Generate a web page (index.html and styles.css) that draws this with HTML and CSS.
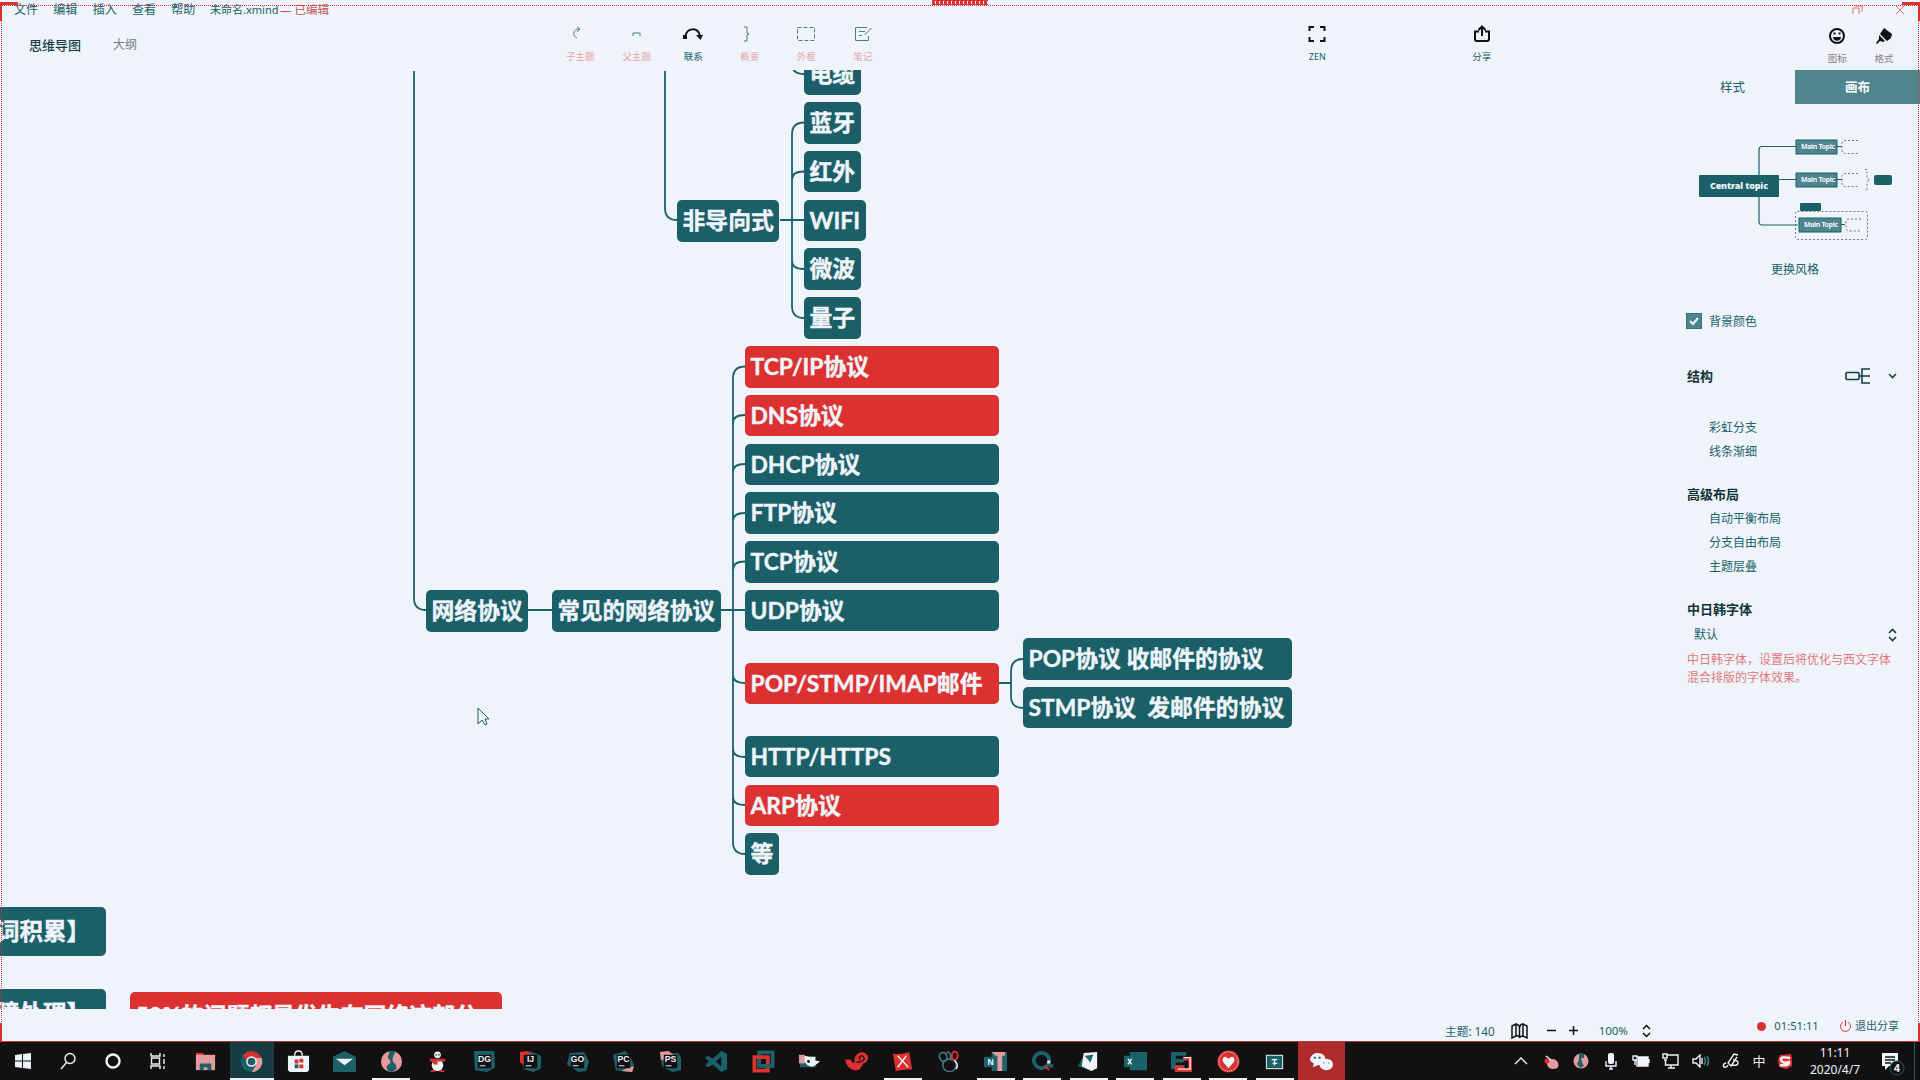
FILE: index.html
```html
<!DOCTYPE html>
<html lang="zh-CN">
<head>
<meta charset="utf-8">
<title>未命名.xmind</title>
<link rel="stylesheet" href="styles.css">
</head>
<body>
<div class="desktop">
  <div class="app">
    <header class="header">
      <div class="menubar">
        <nav class="menus"><span>文件</span><span>编辑</span><span>插入</span><span>查看</span><span>帮助</span></nav>
        <span class="doc">未命名.xmind</span><span class="edited">— 已编辑</span>
        <div class="winctl">
          <svg width="12" height="10" viewBox="0 0 12 10"><path d="M1 9V3h6v6M3 1h7v6"/></svg>
          <svg width="10" height="10" viewBox="0 0 10 10"><path d="M1 1l8 8M9 1L1 9"/></svg>
        </div>
      </div>
      <div class="toolbar">
        <div class="views"><b>思维导图</b><span>大纲</span></div>
        <div class="tools">
          <div class="tool faint"><svg width="20" height="18" viewBox="0 0 20 18"><path d="M7 13C2 11 3 4 9 4M7 2l3 2-3 3"/></svg><span>子主题</span></div>
          <div class="tool faint"><svg width="20" height="18" viewBox="0 0 20 18"><path d="M6 11V8h7v3"/></svg><span>父主题</span></div>
          <div class="tool"><svg class="strong" width="22" height="18" viewBox="0 0 22 18"><path d="M3 12C5 2 16 2 18 11"/><path class="fill" d="M1 10h4v4H1zM14 10h7l-2.500 5z"/></svg><span>联系</span></div>
          <div class="tool faint"><svg width="20" height="18" viewBox="0 0 20 18"><path d="M4 2h3v6l2 1-2 1v6H4"/></svg><span>概要</span></div>
          <div class="tool faint"><svg width="20" height="18" viewBox="0 0 20 18"><path stroke-dasharray="4 2" d="M1.500 2.500h17v13h-17z"/></svg><span>外框</span></div>
          <div class="tool faint"><svg width="20" height="18" viewBox="0 0 20 18"><path d="M14 2.500H2.500v13h13V11M6 6.500h6M6 10.500h3M18.500 3l-7 7"/></svg><span>笔记</span></div>
        </div>
        <div class="tool zen"><svg class="strong" width="18" height="18" viewBox="0 0 18 18"><path d="M1.500 6V2H6M12 2h4.500v4M16.500 12v4H12M6 16H1.500v-4"/></svg><span>ZEN</span></div>
        <div class="tool share"><svg class="strong" width="18" height="18" viewBox="0 0 18 18"><path d="M6 6.500H2V14q0 2 2 2h10q2 0 2-2V6.500h-4M9 11V2M5.500 5L9 1.500 12.500 5"/></svg><span>分享</span></div>
        <div class="tool emoji"><svg class="strong" width="18" height="18" viewBox="0 0 18 18"><circle cx="9" cy="9" r="7"/><path class="fill" d="M5 10h8c0 5-8 5-8 0zM5.500 5.500h2v2h-2zM10.500 5.500h2v2h-2z"/></svg><span class="warm">图标</span></div>
        <div class="tool format"><svg width="18" height="18" viewBox="0 0 18 18"><path class="fill" d="M9 1l8 6-1 4-4 3-7-7zM4 8l6 6-2 1-3-1-3 3-1-1 3-4z"/></svg><span class="warm">格式</span></div>
      </div>
    </header>

    <div class="workspace">
      <main class="canvas">
        <svg class="links" width="1662" height="939" viewBox="0 70 1662 939">
          <path d="M414 71V598q0 12 12 12M665 71V208q0 12 12 12M780 220h24M792 64q0 10 12 10M804 122.500q-12 0-12 12V306q0 12 12 12M804 171.500q-12 0-12 8M792 261q0 8 12 8M528 610h24M721 610h24"/>
          <path d="M745 366.500q-12 0-12 12V842q0 12 12 12M745 415q-12 0-12 8M745 464q-12 0-12 8M745 513q-12 0-12 8M745 561.500q-12 0-12 8M733 675q0 8 12 8M733 749q0 8 12 8M733 797q0 8 12 8M999 683h12M1023 659q-12 0-12 12v25q0 12 12 12"/>
        </svg>
        <div class="branch media"><div class="node">电缆</div><div class="node">蓝牙</div><div class="node">红外</div><div class="node">WIFI</div><div class="node">微波</div><div class="node">量子</div></div>
        <div class="branch unguided"><div class="node">非导向式</div></div>
        <div class="branch network"><div class="node">网络协议</div></div>
        <div class="branch common"><div class="node">常见的网络协议</div></div>
        <div class="branch protocols">
          <div class="node red">TCP/IP协议</div><div class="node red">DNS协议</div><div class="node">DHCP协议</div><div class="node">FTP协议</div><div class="node">TCP协议</div><div class="node">UDP协议</div>
          <div class="node red mailnode">POP/STMP/IMAP邮件</div>
          <div class="node">HTTP/HTTPS</div><div class="node red">ARP协议</div><div class="node short">等</div>
        </div>
        <div class="branch mail"><div class="node">POP协议 收邮件的协议</div><div class="node">STMP协议&nbsp; 发邮件的协议</div></div>
        <div class="branch roots"><div class="node big">词积累】</div><div class="node big">障处理】</div></div>
        <div class="branch note"><div class="node red big">50%的问题都是发生在网络这部分</div></div>
        <svg class="cursor" width="13" height="20" viewBox="0 0 13 20"><path d="M1 1v16l4-4 3 5 2-1-2-5h4z"/></svg>
      </main>

      <aside class="panel">
        <div class="tabs"><span>样式</span><span class="on">画布</span></div>
        <svg class="preview" width="250" height="120" viewBox="1670 130 250 120">
          <g class="pl"><path d="M1796 146.500h-34q-3 0-3 3v72q0 3.500 3 3.500h36M1779 179.500h17M1837 146.500h5M1837 179.500h5M1841 224.500h4"/></g>
          <rect class="pf" x="1699" y="175" width="80" height="22" rx="1"/>
          <text class="ct" x="1710" y="189" textLength="58">Central topic</text>
          <g class="pm"><rect x="1796" y="140" width="41" height="14"/><rect x="1796" y="173" width="41" height="14"/><rect x="1799" y="218" width="42" height="14"/></g>
          <g class="mt"><text x="1801" y="149" textLength="34">Main Topic</text><text x="1801" y="182" textLength="34">Main Topic</text><text x="1804" y="227" textLength="34">Main Topic</text></g>
          <rect class="pf" x="1800" y="203" width="21" height="8" rx="1"/><rect class="pf" x="1874" y="175" width="18" height="10" rx="2"/>
          <rect class="dash" x="1795.500" y="211.500" width="72" height="28" rx="2"/>
          <path class="dash" d="M1858 140.500h-13q-3 0-3 3v6q0 4 3 4h13M1858 173.500h-13q-3 0-3 3v6q0 4 3 4h13M1861 219h-12q-3 0-3 3v5q0 4 3 4h12M1865 169.500h2v9l3 1.500-3 1.500v9h-2"/>
        </svg>
        <div class="restyle">更换风格</div>
        <div class="check"><svg width="16" height="16" viewBox="0 0 16 16"><rect width="16" height="16" rx="1"/><path d="M4 8l3 3 5-6"/></svg><span>背景颜色</span></div>
        <div class="row structure"><b>结构</b><svg width="26" height="18" viewBox="0 0 26 18"><rect x="1" y="5.500" width="13" height="7" rx="1"/><path d="M14 9h11M25 2h-8v14h8"/></svg><svg width="9" height="6" viewBox="0 0 9 6"><path d="M1 1l3.500 3.500L8 1"/></svg></div>
        <div class="options first"><span>彩虹分支</span><span>线条渐细</span></div>
        <b class="title layout">高级布局</b>
        <div class="options"><span>自动平衡布局</span><span>分支自由布局</span><span>主题层叠</span></div>
        <b class="title cjk">中日韩字体</b>
        <div class="row font"><span>默认</span><svg width="9" height="14" viewBox="0 0 9 14"><path d="M1 5l3.500-3.500L8 5M1 9l3.500 3.500L8 9"/></svg></div>
        <p class="hint">中日韩字体，设置后将优化与西文字体<br>混合排版的字体效果。</p>
      </aside>
    </div>

    <footer class="status">
      <span class="count">主题: 140</span>
      <svg class="map" width="17" height="16" viewBox="0 0 17 16"><path d="M1 3l4-2v12l-4 2zM5 1q4 1 3.500 4v10Q9 12 5 13M8.500 5Q9 1 12 1v12q-3 0-3.500 2M12 1l4 2v12l-4-2"/></svg>
      <svg class="minus" width="9" height="9" viewBox="0 0 9 9"><path d="M0 4.500h9"/></svg>
      <svg class="plus" width="9" height="9" viewBox="0 0 9 9"><path d="M0 4.500h9M4.500 0v9"/></svg>
      <span class="zoom">100%</span>
      <svg class="updown" width="9" height="14" viewBox="0 0 9 14"><path d="M1 5l3.500-3.500L8 5M1 9l3.500 3.500L8 9"/></svg>
      <i class="rec"></i><span class="time">01:51:11</span>
      <svg class="power" width="13" height="13" viewBox="0 0 13 13"><path d="M4 2a5 5 0 1 0 5 0M6.500 0v6"/></svg><span class="quit">退出分享</span>
    </footer>
    <div class="shareframe"><i class="tl"></i><i class="tr"></i><i class="bl"></i><i class="br"></i><i class="tab"></i></div>
  </div>

  <div class="taskbar">
    <div class="sys">
      <span><svg width="16" height="18" viewBox="0 0 16 18"><path class="w" d="M0 3l7-1v6.500H0zM8 2l8-1v7.500H8zM0 9.500h7V16l-7-1zM8 9.500h8V17l-8-1z"/></svg></span>
      <span><svg width="18" height="18" viewBox="0 0 18 18"><circle class="wl" cx="11" cy="6.500" r="5"/><path class="wl" d="M7.500 10.500L2 17"/></svg></span>
      <span><svg width="18" height="18" viewBox="0 0 18 18"><circle class="wl thick" cx="9" cy="9" r="6.500"/></svg></span>
      <span><svg width="18" height="18" viewBox="0 0 18 18"><path class="wl" d="M2 1v3h9V1M2.500 6h8v6h-8zM2 17v-3h9v3M15 2v3M15 7v5M15 14v3"/></svg></span>
    </div>
    <div class="apps">
      <span><svg viewBox="0 0 24 24"><path class="r" d="M2 3h8v3H2z"/><path class="p" d="M2 5h20v16H2z"/><path class="t" d="M6 14h12v7h-4v-3h-4v3H6z"/></svg></span>
      <span class="active run"><svg viewBox="0 0 24 24"><circle class="t" cx="12" cy="12" r="11"/><path class="p" d="M13 8h9.500a11 11 0 0 1-10 15l4-7z"/><path class="r" d="M3 6a11 11 0 0 1 19 2H12l-5 3z"/><circle class="w" cx="12" cy="12" r="5.500"/><circle class="t" cx="12" cy="12" r="4"/></svg></span>
      <span><svg viewBox="0 0 24 24"><path class="wl" d="M8 6q0-5 4-5t4 5"/><path class="w" d="M1 6h22v15l-2 2H3l-2-2z"/><path class="r" d="M8 10h4v4H8zM13 9h4v4h-4zM13 15h4v4h-4z"/><path class="t" d="M8 15h4v4H8z"/></svg></span>
      <span><svg viewBox="0 0 24 24"><path class="t" d="M0 7l12-6 12 6v16H0z"/><path class="w" d="M3 9h18l-9 7z"/></svg></span>
      <span class="run"><svg viewBox="0 0 24 24"><circle class="p" cx="12" cy="12" r="11"/><path class="t" d="M10 1h7l-3 5-1 4 1 3q4 2 3 7l-5 3q-6-1-5-6l4-4-1-3q-3-1-1-5z"/></svg></span>
      <span><svg viewBox="0 0 24 24"><circle class="w" cx="12" cy="5" r="3.500"/><ellipse class="w" cx="12" cy="16" rx="6" ry="6"/><path class="r" d="M4 9h16v3H4zM7 12h5v3H8zM5 21h5v2H5zM14 21h5v2h-5z"/><path class="k" d="M10 4h1v2h-1zM13 4h1v2h-1z"/></svg></span>
      <span><svg viewBox="0 0 24 24"><path class="t" d="M1 1h21l1 17-8 5L2 21z"/><path class="k" d="M5 5h14v14H5z"/><path class="w" d="M7 16h6v1H7z"/><text x="12" y="13">DG</text></svg></span>
      <span><svg viewBox="0 0 24 24"><path class="t" d="M2 8L11 1l12 5v13l-8 4-10-3z"/><path class="r" d="M1 2l8-1 5 5-8 9-5-2z"/><path class="k" d="M5 5h14v14H5z"/><path class="w" d="M7 16h6v1H7z"/><text x="12" y="13">IJ</text></svg></span>
      <span><svg viewBox="0 0 24 24"><path class="t" d="M4 3l15-1 5 10-3 10-8 1L1 15z"/><path class="k" d="M5 5h14v14H5z"/><path class="w" d="M7 16h6v1H7z"/><text x="12" y="13">GO</text></svg></span>
      <span><svg viewBox="0 0 24 24"><path class="t" d="M1 5l13-4 4 5 5 9-4 8-15-2z"/><path class="p" d="M15 19l8-2-2 6-11-1z"/><path class="k" d="M5 5h14v14H5z"/><path class="w" d="M7 16h6v1H7z"/><text x="12" y="13">PC</text></svg></span>
      <span><svg viewBox="0 0 24 24"><path class="t" d="M2 4l18-1 3 5v13l-9 2L3 17z"/><path class="p" d="M1 2l9-1 5 4-13 6z"/><path class="k" d="M5 5h14v14H5z"/><path class="w" d="M7 16h6v1H7z"/><text x="12" y="13">PS</text></svg></span>
      <span><svg viewBox="0 0 24 24"><path class="t" fill-rule="evenodd" d="M17 1l6 3v16l-6 3-9-8-5 3-3-2 4-4-4-4 3-2 5 3zM17 7l-6 5 6 5z"/></svg></span>
      <span><svg viewBox="0 0 24 24"><path class="ts" d="M7.500 2.500h14v14h-14z"/><path class="rs" d="M2.500 7.500h14v14h-14z"/><path class="ts" d="M7.500 11v5.500H21.500"/></svg></span>
      <span><svg viewBox="0 0 24 24"><path class="t" d="M2 7h17v11H2z"/><path class="w" d="M1 6h6l5 1h6v4l5 1-5 4q-3 3-8 0z"/><path class="p" d="M1 5h6v9H1z"/><circle class="k" cx="11" cy="12" r="1.500"/></svg></span>
      <span><svg viewBox="0 0 24 24"><path class="r" d="M0 10h6q1 4 4 3-1-9 7-11 7 1 7 6t-5 6q-3 8-9 7-8-1-10-11z"/><path class="kl" d="M12 13q5 0 8-3 0-4-3-4-4 2-1 4"/></svg></span>
      <span class="run"><svg viewBox="0 0 24 24"><path class="r" d="M2 4q9 1 17-2l3 18q-9 0-17 2z"/><path class="wl" d="M7 6l11 12M16 6L7 18"/></svg></span>
      <span><svg viewBox="0 0 24 24"><path class="tl2" d="M5 12q-5-3-3-8 3-3 6 0 3 4 0 7zM8 4q4-4 5 1v6"/><ellipse class="tl2" cx="12" cy="16" rx="7" ry="6.500"/><ellipse class="rl" cx="17.500" cy="6" rx="3" ry="4.500"/><path class="wl" d="M17 11q5 3 2 9"/></svg></span>
      <span class="run"><svg viewBox="0 0 24 24"><path class="t" d="M8 2h16v20H8zM0 7h14v11H0z"/><path class="p" d="M8 2h14v4H12zM14 6h5v16h-5z"/><text x="7" y="16">N</text></svg></span>
      <span class="run"><svg viewBox="0 0 24 24"><circle class="ts" cx="11" cy="11" r="8"/><path class="ts" d="M16 15l7 2"/><path class="rl" d="M14 16l5 5"/><path class="w" d="M17 11h3v3h-3z"/></svg></span>
      <span class="run"><svg viewBox="0 0 24 24"><path class="t" d="M8 4L1 17l15 5z"/><path class="w" d="M7 3l14-1v17l-6 3-10-5z"/><path class="t" d="M8 6l9-1-3 8z"/></svg></span>
      <span class="run"><svg viewBox="0 0 24 24"><path class="t" d="M6 2h18v19H6zM0 6h12v12H0z"/><path class="wl" d="M4 9l4 6M8 9l-4 6"/></svg></span>
      <span class="run"><svg viewBox="0 0 24 24"><path class="t" d="M1 2h16v4H6v3h9v4H6v3h9v4H1z"/><path class="rs" d="M14 9h7v12H7v-3h8"/><path class="wl" d="M14 8h7v12H8"/></svg></span>
      <span class="run"><svg viewBox="0 0 24 24"><circle class="r" cx="12" cy="12" r="11.500"/><circle class="rw" cx="12" cy="12" r="10"/><path class="w" d="M12 19L6 12q-1-5 3-5l3 2 3-2q4 0 3 5z"/></svg></span>
      <span class="run"><svg viewBox="0 0 24 24"><path class="w" d="M3 5h18v15H3z"/><path class="t" d="M4 6h16v13H4z"/><path class="wl" d="M9 10h6M10 14h5M12 9v7"/></svg></span>
      <span class="wechat"><svg viewBox="0 0 24 24"><path class="w" d="M8 3q8 0 8 7 0 6-8 6l-5 2 1-4Q0 12 0 9q2-6 8-6z"/><ellipse class="w" cx="17" cy="15" rx="7" ry="6"/><path class="t" d="M4 7h2v2H4zM9 7h2v2H9zM14 13h1v1h-1zM19 13h1v1h-1z"/></svg></span>
    </div>
    <div class="tray">
      <span><svg width="14" height="8" viewBox="0 0 14 8"><path class="wl" d="M1 7l6-6 6 6"/></svg></span>
      <span><svg width="16" height="16" viewBox="0 0 16 16"><path class="p" d="M4 7q9-3 11 3t-6 6q-6-1-5-9z"/><path class="wl" d="M3 3l5 4"/><circle class="r" cx="4" cy="8" r="2.500"/></svg></span>
      <span><svg width="16" height="16" viewBox="0 0 16 16"><circle class="p" cx="8" cy="8" r="7.500"/><path class="t" d="M6 1h5v4H8l1 4 2 4-4 2-3-4 2-4z"/></svg></span>
      <span><svg width="12" height="18" viewBox="0 0 12 18"><rect class="w" x="3" y="1" width="6" height="11" rx="2"/><path class="wl" d="M1 9v5h10V9M6 14v3M4 17h4"/></svg></span>
      <span><svg width="18" height="14" viewBox="0 0 18 14"><path class="w" d="M6 3h10v9H6z"/><path class="wl" d="M1 2h4v4H1zM3 6v5M5 3h11v9H5zM17 5v4"/></svg></span>
      <span><svg width="18" height="16" viewBox="0 0 18 16"><path class="wl" d="M2 7h3M3.500 7v5H16V2H5M1 1h4v4H1zM9 12v3M6 15h7"/></svg></span>
      <span><svg width="18" height="14" viewBox="0 0 18 14"><path class="wl" d="M1 5h3l4-4v12L4 9H1zM10 4v6"/><path class="tl2" d="M12 3q3 4 0 8M15 2q3 5 0 10"/></svg></span>
      <span><svg width="18" height="16" viewBox="0 0 18 16"><path class="wl" d="M16 2l-4-1-6 9 3 3 6-9M4 10q-4 1-2 4 3 1 4-2M11 7q5 0 5 3t-6 2"/></svg></span>
      <span class="ime">中</span>
      <span><svg width="16" height="16" viewBox="0 0 16 16"><path class="r" d="M3 2l11-1 1 4v8l-6 3-7-2-1-8z"/><path class="wl thick" d="M13 5Q3 3 4 7t8 2q1 4-9 3"/></svg></span>
      <div class="clock"><span>11:11</span><span>2020/4/7</span></div>
      <div class="notify"><svg width="24" height="24" viewBox="0 0 24 24"><path class="w" d="M1 1h16v13H8l-4 4v-4H1z"/><path class="kl" d="M4 5h10M4 8h10M4 11h6"/><circle cx="16" cy="16" r="7"/><text x="16" y="20">4</text></svg></div>
    </div>
  </div>
</div>
</body>
</html>
```

FILE: styles.css
```css
:root { --bg: #eef4f9; --teal: #1b616a; --node: #1b5f68; --red: #dc3131; --ink: #121011; }
* { box-sizing: border-box; }
body { margin: 0; background: var(--bg); color: var(--teal); font: 12px/16px "Noto Sans", "Noto Sans CJK SC", sans-serif; }
svg { display: block; flex: none; fill: none; stroke: currentColor; }
text { stroke: none; }
.desktop { width: 1920px; height: 1080px; display: flex; flex-direction: column; overflow: hidden; }
.app { height: 1042px; display: flex; flex-direction: column; position: relative; }

.header { height: 70px; }
.menubar { height: 20px; padding: 2px 15px 0 14px; display: flex; white-space: nowrap; }
.menus { display: flex; gap: 15.300px; width: 196px; }
.doc { width: 70px; font-size: 11px; }
.edited { color: #c2585d; font-size: 11.500px; }
.winctl { margin-left: auto; display: flex; gap: 31px; align-items: center; color: #e07577; margin-top: -3px; }
.toolbar { height: 50px; padding-left: 29px; display: flex; }
.views { width: 524px; display: flex; align-items: center; gap: 32px; padding-bottom: 1px; }
.views b { font-size: 13px; color: #123e45; font-weight: 500; }
.views span { color: #6f8187; }
.tools { display: flex; gap: 2px; margin-right: 12px; }
.tool { width: 54.500px; display: flex; flex-direction: column; align-items: center; font-size: 9.500px; line-height: 12px; padding-top: 5px; gap: 8px; }
.tool.faint { color: #4b7f88; }
.tool.faint span { color: #e8a5a9; }
.tool .fill { fill: var(--ink); stroke: none; }
.strong { color: var(--ink); stroke-width: 2; }
.warm { color: #8c7d84; }
.zen { margin-left: 388px; }
.zen span { font-size: 9px; }
.share { margin-left: 110px; }
.emoji { margin-left: 301px; padding-top: 7px; }
.format { width: 39px; padding-top: 7px; }

.workspace { height: 939px; display: flex; }
.canvas { width: 1670px; position: relative; overflow: hidden; }
.links { stroke: var(--teal); stroke-width: 1.800; }
.branch { position: absolute; display: flex; flex-direction: column; align-items: flex-start; gap: 7.250px; }
.node { height: 41.500px; padding: 0 5.500px; border-radius: 5px; background: var(--node); color: var(--bg); font: bold 22.850px/41.500px "Lato", "Noto Sans CJK SC", sans-serif; white-space: pre; -webkit-text-stroke: 0.400px var(--bg); }
.node.red { background: var(--red); }
.media { left: 804px; top: -16.750px; }
.unguided { left: 677px; top: 130px; }
.network { left: 426px; top: 520px; }
.common { left: 552px; top: 520px; }
.common .node { font-size: 22.500px; }
.protocols { left: 745px; top: 276px; width: 254px; align-items: stretch; }
.mailnode { margin: 24.300px 0; }
.node.short { align-self: flex-start; }
.mail { left: 1023px; top: 568px; width: 269px; align-items: stretch; }
.node.big { height: 49px; font-size: 23.500px; line-height: 49px; }
.roots { left: -20px; top: 837px; gap: 33px; width: 126px; align-items: stretch; }
.roots .node { padding-left: 16px; }
.note { left: 130px; top: 922px; width: 372px; align-items: stretch; }
.note .node.big { font-size: 22.850px; line-height: 47px; }
.cursor { position: absolute; left: 477px; top: 637px; }

.panel { width: 250px; display: flex; flex-direction: column; }
.tabs { display: flex; height: 34px; line-height: 36px; text-align: center; font-size: 12.500px; }
.tabs span { flex: 1; }
.tabs .on { background: #4f868e; color: #fff; font-weight: bold; }
.preview { margin-top: 26px; }
.pl { stroke: var(--teal); stroke-width: 1.200; }
.pf { fill: var(--node); stroke: none; }
.pm { fill: #4f868e; stroke: var(--teal); }
.ct { font: 900 9px "Noto Sans", sans-serif; fill: var(--bg); }
.mt { font: bold 7px "Noto Sans", sans-serif; fill: var(--bg); }
.dash { stroke: #86707a; stroke-dasharray: 2 2; }
.restyle { text-align: center; margin-top: 12px; }
.check { display: flex; align-items: center; gap: 7px; margin: 35px 0 0 16px; }
.check rect { fill: #4f868e; stroke: var(--teal); }
.check path { stroke: var(--bg); stroke-width: 2; }
.check span { position: relative; top: 1px; }
.row { display: flex; align-items: center; }
.row svg { color: #123e45; stroke-width: 1.600; }
.panel b { font-size: 13px; color: #123238; }
.structure { margin: 37.500px 23px 0 17px; height: 18px; gap: 17px; }
.structure b { margin-right: auto; }
.options { margin: 9px 0 0 39px; display: flex; flex-direction: column; gap: 8.300px; }
.options.first { margin-top: 35.500px; }
.title { margin-left: 17px; }
.layout { margin-top: 25.500px; }
.cjk { margin-top: 25.500px; }
.font { margin: 10.500px 23px 0 24px; justify-content: space-between; }
.hint { margin: 8px 0 0 17px; line-height: 18px; color: #e2787b; white-space: nowrap; }

.status { height: 33px; padding: 10px 21px 0 1445px; display: flex; align-items: center; white-space: nowrap; }
.status svg { color: var(--ink); stroke-width: 1.500; }
.count { width: 66px; font-size: 11.700px; }
.status .minus { margin-left: 19px; }
.status .plus { margin-left: 13px; }
.zoom { margin-left: 21px; width: 44px; font-size: 11.500px; }
.rec { width: 9px; height: 9px; border-radius: 50%; background: var(--red); margin: -8px 8px 0 106px; }
.time { width: 65px; font-size: 11.200px; margin-top: -10px; }
.status .power { color: var(--red); stroke-width: 1; margin: -9px 3px 0 0; }
.quit { font-size: 11px; margin-top: -9px; }

.shareframe { position: absolute; inset: 5px 1px 0; border: 1px dotted var(--red); border-bottom: 1px solid #a83a3d; pointer-events: none; }
.shareframe i { position: absolute; border: 0 solid var(--red); width: 18px; height: 19px; }
.shareframe .tl { left: -2px; top: -4px; border-width: 3px 0 0 2px; }
.shareframe .tr { right: -2px; top: -4px; border-width: 3px 2px 0 0; }
.shareframe .bl { left: -2px; bottom: -1px; border-width: 0 0 1px 2px; }
.shareframe .br { right: -2px; bottom: -1px; border-width: 0 2px 1px 0; }
.shareframe .tab { left: 930px; top: -6px; width: 56px; height: 5px; background: repeating-linear-gradient(90deg, transparent 0 3px, var(--bg) 3px 4px) 0 1px / 100% 3px no-repeat var(--red); }

.taskbar { height: 38px; background: var(--ink); color: var(--bg); display: flex; }
.sys { display: flex; width: 182px; }
.sys span { width: 45px; display: grid; place-items: center; }
.apps { display: flex; width: 1163px; }
.apps span { width: 46.500px; display: grid; place-items: center; border: 0 solid var(--bg); }
.apps svg { width: 23px; height: 23px; stroke: none; }
.apps text { font: bold 9px "Liberation Sans", sans-serif; fill: var(--bg); text-anchor: middle; }
.apps .run { background: linear-gradient(var(--bg), var(--bg)) 50% 100% / 38px 2px no-repeat; }
.apps .active { background: linear-gradient(var(--bg), var(--bg)) 50% 100% / 44px 2px no-repeat, linear-gradient(#173d43, #173d43) 50% 0 / 44px 38px no-repeat; }
.apps .wechat { background: #b02b2c; }
.w { fill: var(--bg); stroke: none; }
.t { fill: var(--teal); stroke: none; }
.r { fill: var(--red); stroke: none; }
.p { fill: #e59a9e; stroke: none; }
.k { fill: var(--ink); stroke: none; }
.wl { stroke: var(--bg); stroke-width: 1.400; }
.kl { stroke: var(--ink); stroke-width: 1.300; }
.rw { stroke: var(--bg); stroke-width: 1; stroke-dasharray: 1 1; }
.rl { stroke: var(--red); stroke-width: 2; }
.tl2 { stroke: #3c7b84; stroke-width: 1.600; }
.ts { stroke: var(--teal); stroke-width: 4; }
.rs { stroke: var(--red); stroke-width: 4; }
.thick { stroke-width: 2.400; }
.tray { margin-left: auto; width: 414px; display: flex; }
.tray > span { width: 30px; display: grid; place-items: center; }
.tray > span:nth-of-type(n+9) { width: 26px; }
.ime { font-size: 13px; }
.clock { width: 74px; display: flex; flex-direction: column; align-items: center; font-size: 12px; line-height: 17px; padding-top: 2px; }
.notify { width: 43px; padding: 10px 0 0 9px; border-right: 1px solid var(--teal); }
.notify circle { fill: var(--ink); stroke: var(--teal); }
.notify text { font: bold 11px "Noto Sans", sans-serif; fill: var(--bg); text-anchor: middle; }
```
